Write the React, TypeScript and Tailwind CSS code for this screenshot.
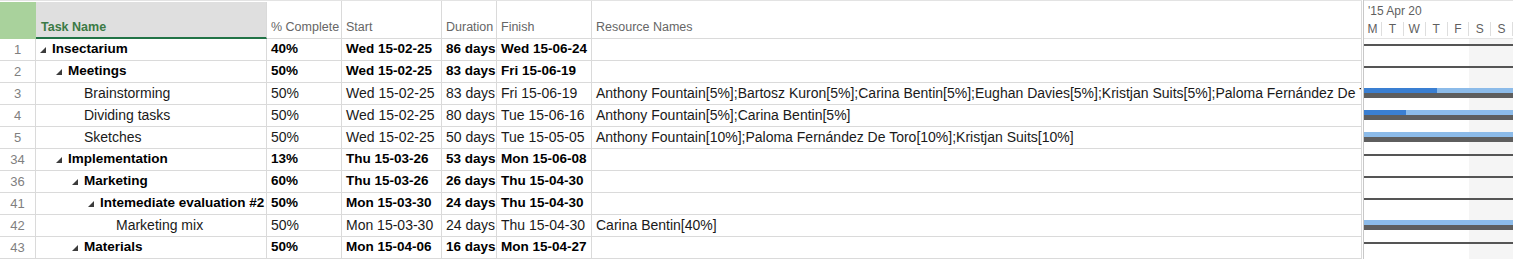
import type { ReactNode } from 'react';

// ---------------------------------------------------------------------------
// Data — task rows of the project sheet
// ---------------------------------------------------------------------------

type Task = {
  id: number;
  level: 1 | 2 | 3 | 4 | 5;
  name: string;
  summary: boolean;
  pct: string;
  start: string;
  duration: string;
  finish: string;
  resources: string;
  /** width in px of the dark-blue progress part of the gantt bar */
  done: number;
};

const TASKS: Task[] = [
  { id: 1, level: 1, name: 'Insectarium', summary: true, pct: '40%', start: 'Wed 15-02-25', duration: '86 days', finish: 'Wed 15-06-24', resources: '', done: 0 },
  { id: 2, level: 2, name: 'Meetings', summary: true, pct: '50%', start: 'Wed 15-02-25', duration: '83 days', finish: 'Fri 15-06-19', resources: '', done: 0 },
  {
    id: 3, level: 3, name: 'Brainstorming', summary: false, pct: '50%', start: 'Wed 15-02-25', duration: '83 days', finish: 'Fri 15-06-19',
    resources: 'Anthony Fountain[5%];Bartosz Kuron[5%];Carina Bentin[5%];Eughan Davies[5%];Kristjan Suits[5%];Paloma Fernández De Toro[5%]',
    done: 73,
  },
  { id: 4, level: 3, name: 'Dividing tasks', summary: false, pct: '50%', start: 'Wed 15-02-25', duration: '80 days', finish: 'Tue 15-06-16', resources: 'Anthony Fountain[5%];Carina Bentin[5%]', done: 42 },
  {
    id: 5, level: 3, name: 'Sketches', summary: false, pct: '50%', start: 'Wed 15-02-25', duration: '50 days', finish: 'Tue 15-05-05',
    resources: 'Anthony Fountain[10%];Paloma Fernández De Toro[10%];Kristjan Suits[10%]',
    done: 0,
  },
  { id: 34, level: 2, name: 'Implementation', summary: true, pct: '13%', start: 'Thu 15-03-26', duration: '53 days', finish: 'Mon 15-06-08', resources: '', done: 0 },
  { id: 36, level: 3, name: 'Marketing', summary: true, pct: '60%', start: 'Thu 15-03-26', duration: '26 days', finish: 'Thu 15-04-30', resources: '', done: 0 },
  { id: 41, level: 4, name: 'Intemediate evaluation #2', summary: true, pct: '50%', start: 'Mon 15-03-30', duration: '24 days', finish: 'Thu 15-04-30', resources: '', done: 0 },
  { id: 42, level: 5, name: 'Marketing mix', summary: false, pct: '50%', start: 'Mon 15-03-30', duration: '24 days', finish: 'Thu 15-04-30', resources: 'Carina Bentin[40%]', done: 0 },
  { id: 43, level: 3, name: 'Materials', summary: true, pct: '50%', start: 'Mon 15-04-06', duration: '16 days', finish: 'Mon 15-04-27', resources: '', done: 0 },
];

// outline indent per level (16px a step)
const INDENT: Record<Task['level'], string> = {
  1: 'pl-[4px]',
  2: 'pl-[20px]',
  3: 'pl-[36px]',
  4: 'pl-[52px]',
  5: 'pl-[68px]',
};

const DAYS = ['M', 'T', 'W', 'T', 'F', 'S', 'S'];

const LINE = 'border-[#dadada]';

// ---------------------------------------------------------------------------
// Small pieces
// ---------------------------------------------------------------------------

function CollapseIcon(): JSX.Element {
  return (
    <svg width="6" height="6" viewBox="0 0 6 6" aria-hidden="true" className="block">
      <polygon points="6,0 6,6 0,6" fill="#3c3c3c" />
    </svg>
  );
}

function HeadCell({ w, children }: { w: string; children: ReactNode }): JSX.Element {
  return (
    <div className={`${w} flex-none flex items-end pl-[4px] pb-[4px] border-r border-b ${LINE} text-[12.5px] leading-[14px] text-[#666666] whitespace-nowrap overflow-hidden`}>
      {children}
    </div>
  );
}

function Cell({ w, bold, children }: { w: string; bold: boolean; children: ReactNode }): JSX.Element {
  return (
    <div
      className={`${w} flex-none flex items-center pl-[4px] border-r ${LINE} whitespace-nowrap overflow-hidden ${
        bold ? 'font-bold text-[13.5px] text-black' : 'text-[14px] text-[#1a1a1a]'
      }`}
    >
      {children}
    </div>
  );
}

// ---------------------------------------------------------------------------
// Sheet (left pane)
// ---------------------------------------------------------------------------

function SheetRow({ task }: { task: Task }): JSX.Element {
  const b = task.summary;
  return (
    <div className={`flex h-[22px] border-b ${LINE}`}>
      <div className={`w-[36px] flex-none flex items-center justify-center border-r ${LINE} text-[13px] text-[#7f7f7f]`}>
        {task.id}
      </div>
      <div className={`w-[231px] flex-none flex items-center ${INDENT[task.level]} border-r ${LINE} whitespace-nowrap overflow-hidden`}>
        <span className="w-[12px] flex-none flex items-center">{b && <CollapseIcon />}</span>
        <span className={b ? 'font-bold text-[13.5px] text-black' : 'text-[14px] text-[#1a1a1a]'}>{task.name}</span>
      </div>
      <Cell w="w-[75px]" bold={b}>{task.pct}</Cell>
      <Cell w="w-[100px]" bold={b}>{task.start}</Cell>
      <Cell w="w-[55px]" bold={b}>{task.duration}</Cell>
      <Cell w="w-[95px]" bold={b}>{task.finish}</Cell>
      <Cell w="w-[770px]" bold={false}>{task.resources}</Cell>
    </div>
  );
}

function Sheet(): JSX.Element {
  return (
    <div className="flex-none w-[1362px] flex flex-col">
      <div className="flex h-[39px] border-t border-[#e3e3e3]">
        <div className="w-[36px] flex-none bg-[#a9d29c] mt-[1px]" />
        <div className={`w-[231px] flex-none flex items-end pl-[5px] pb-[3px] bg-[#dfdfdf] mt-[1px] border-r ${LINE} border-b-2 border-b-[#217346]`}>
          <span className="text-[12.5px] leading-[14px] font-bold text-[#3b7a45]">Task Name</span>
        </div>
        <HeadCell w="w-[75px]">% Complete</HeadCell>
        <HeadCell w="w-[100px]">Start</HeadCell>
        <HeadCell w="w-[55px]">Duration</HeadCell>
        <HeadCell w="w-[95px]">Finish</HeadCell>
        <HeadCell w="w-[770px]">Resource Names</HeadCell>
      </div>
      {TASKS.map((t) => (
        <SheetRow key={t.id} task={t} />
      ))}
    </div>
  );
}

// ---------------------------------------------------------------------------
// Gantt (right pane)
// ---------------------------------------------------------------------------

function GanttRow({ task }: { task: Task }): JSX.Element {
  return (
    <div className="h-[22px] pt-[5px] flex flex-col">
      {task.summary ? (
        <div className="h-[2px] bg-[#555555]" />
      ) : (
        <>
          <div className="h-[5px] flex bg-[#8cbbe9]">
            {task.done > 0 && <div className="h-full bg-[#3a7fd2]" style={{ width: task.done }} />}
          </div>
          <div className="h-[5px] bg-[#5e5e5e]" />
        </>
      )}
    </div>
  );
}

function Gantt(): JSX.Element {
  return (
    <div className="flex-1 flex flex-col min-w-0">
      <div className="h-[39px] border-t border-b border-[#e3e3e3] flex flex-col text-[12px] text-[#5f5f5f]">
        <div className="h-[18px] pl-[4px] pt-[2px] flex items-center whitespace-nowrap">'15 Apr 20</div>
        <div className="flex-1 grid grid-cols-[18px_repeat(6,1fr)] items-center">
          {DAYS.map((d, i) => (
            <div key={i} className="h-[14px] flex items-center justify-center border-r border-[#dedede]">
              {d}
            </div>
          ))}
        </div>
      </div>
      <div className="flex-1 flex flex-col bg-[linear-gradient(to_right,white_105px,#f5f5f5_105px)]">
        {TASKS.map((t) => (
          <GanttRow key={t.id} task={t} />
        ))}
      </div>
    </div>
  );
}

// ---------------------------------------------------------------------------
// App
// ---------------------------------------------------------------------------

export default function App(): JSX.Element {
  return (
    <div className="w-[1513px] h-[259px] overflow-hidden bg-white flex font-['Liberation_Sans',Arial,sans-serif]">
      <Sheet />
      <div className="w-[2px] flex-none border-r border-[#c8c8c8]" />
      <Gantt />
    </div>
  );
}
